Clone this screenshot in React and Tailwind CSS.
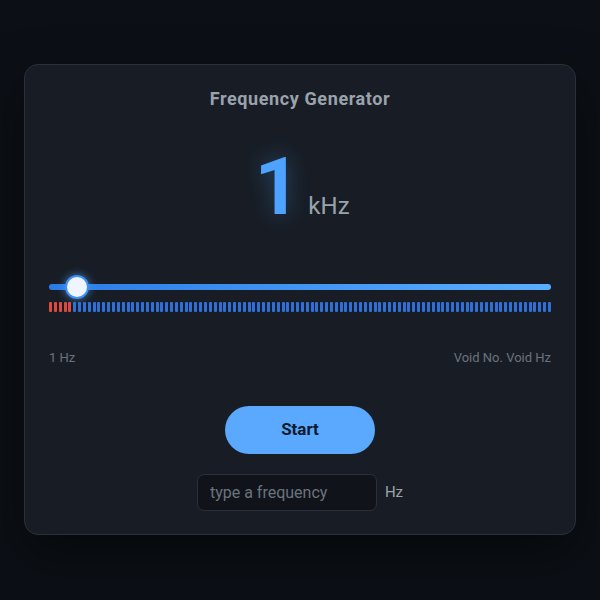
import { useState } from 'react'

const TICKS = 104
const RED = 5

export default function App() {
  const [freq, setFreq] = useState('')

  return (
    <div className="w-[600px] h-[600px] bg-[#0c1016] pt-[64px] px-[24px]" style={{ fontFamily: 'Roboto, "Noto Sans", sans-serif' }}>
      <div className="h-[471px] rounded-[14px] border border-[#2a3039] bg-[#181d25] px-[24px] pt-[22px] flex flex-col shadow-[0_20px_50px_rgba(0,0,0,0.5)]">
        <h1 className="text-center text-[18px] leading-[24px] font-bold tracking-[0.6px] text-[#9aa2ac]">
          Frequency Generator
        </h1>

        <div className="mt-[36px] flex items-baseline justify-center">
          <span className="text-[80px] leading-[80px] font-bold text-[#4da3ff] [text-shadow:0_0_22px_rgba(77,163,255,0.35)] ml-[4px]">
            1
          </span>
          <span className="ml-[8px] text-[24px] text-[#9aa2ac]">kHz</span>
        </div>

        <div className="mt-[49px] relative h-[22px] flex items-center">
          <div className="w-full h-[6px] rounded-full bg-gradient-to-r from-[#2b7be6] to-[#5aaeff]" />
          <div className="absolute left-[18px] top-[1px] w-[20px] h-[20px] rounded-full bg-[#eef5ff] shadow-[0_0_0_2px_#3d8ef5,0_0_8px_2px_rgba(77,163,255,0.7)]" />
        </div>

        <div className="mt-[4px] h-[10px] flex justify-between">
          {Array.from({ length: TICKS }, (_, i) => (
            <div
              key={i}
              className={i < RED ? 'w-[3px] h-full rounded-[1px] bg-[#e0493f]' : 'w-[3px] h-full rounded-[1px] bg-[#2e6fd8]'}
            />
          ))}
        </div>

        <div className="mt-[38px] flex justify-between text-[13px] leading-[16px] text-[#6b737d]">
          <span>1 Hz</span>
          <span>Void No. Void Hz</span>
        </div>

        <div className="mt-[40px] flex justify-center">
          <button className="w-[150px] h-[48px] rounded-full bg-[#5aa9ff] text-[#0f1b2b] text-[17px] font-bold">
            Start
          </button>
        </div>

        <div className="mt-[20px] flex items-center justify-center">
          <input
            value={freq}
            onChange={e => setFreq(e.target.value)}
            placeholder="type a frequency"
            className="w-[180px] h-[37px] rounded-[7px] border border-[#2a3039] bg-[#10141a] px-[12px] text-[16px] text-[#c9d1d9] placeholder:text-[#6b737d] outline-none"
          />
          <span className="ml-[8px] text-[15px] text-[#9aa2ac]">Hz</span>
        </div>
      </div>
    </div>
  )
}
